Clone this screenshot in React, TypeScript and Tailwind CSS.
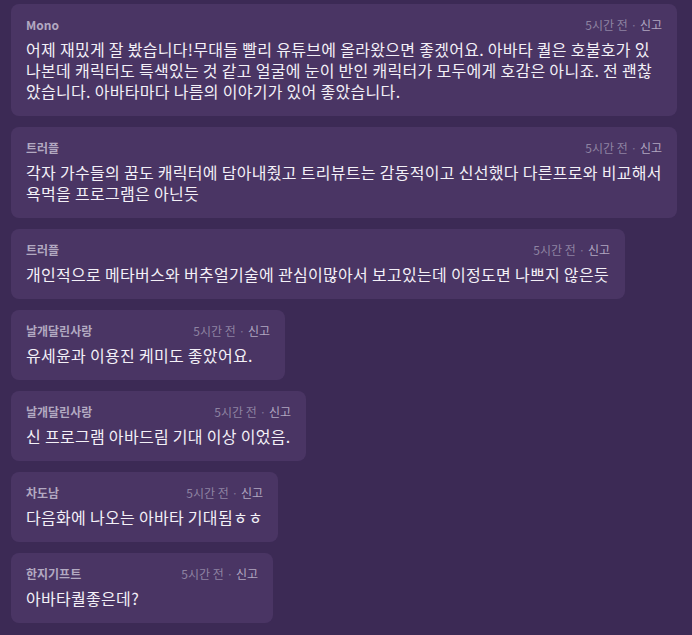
import React from 'react';

type Comment = {
  name: string;
  text: string;
  width: string;
};

const comments: Comment[] = [
  {
    name: 'Mono',
    text: '어제 재밌게 잘 봤습니다!무대들 빨리 유튜브에 올라왔으면 좋겠어요. 아바타 퀄은 호불호가 있나본데 캐릭터도 특색있는 것 같고 얼굴에 눈이 반인 캐릭터가 모두에게 호감은 아니죠. 전 괜찮았습니다. 아바타마다 나름의 이야기가 있어 좋았습니다.',
    width: 'w-[666px]',
  },
  {
    name: '트러플',
    text: '각자 가수들의 꿈도 캐릭터에 담아내줬고 트리뷰트는 감동적이고 신선했다 다른프로와 비교해서 욕먹을 프로그램은 아닌듯',
    width: 'w-[666px]',
  },
  {
    name: '트러플',
    text: '개인적으로 메타버스와 버추얼기술에 관심이많아서 보고있는데 이정도면 나쁘지 않은듯',
    width: 'w-[614px]',
  },
  {
    name: '날개달린사랑',
    text: '유세윤과 이용진 케미도 좋았어요.',
    width: 'w-[274px]',
  },
  {
    name: '날개달린사랑',
    text: '신 프로그램 아바드림 기대 이상 이었음.',
    width: 'w-[295px]',
  },
  {
    name: '차도남',
    text: '다음화에 나오는 아바타 기대됨ㅎㅎ',
    width: 'w-[267px]',
  },
  {
    name: '한지기프트',
    text: '아바타퀄좋은데?',
    width: 'w-[262px]',
  },
];

const CommentCard: React.FC<{ comment: Comment }> = ({ comment }) => {
  return (
    <div className={`${comment.width} rounded-lg bg-[#4a3564] pl-[15px] pr-[15px] pt-[14px] pb-[14px]`}>
      {/* 작성자 + 시간 */}
      <div className="flex items-center justify-between h-[14px] text-[12px] leading-[14px]">
        <span className="font-bold text-[#b2a9c1]">{comment.name}</span>
        <span className="text-[#8e83a2]">
          5시간 전 <span className="text-[#7d7192]">·</span>{' '}
          <span className="text-[#b0a6c0]">신고</span>
        </span>
      </div>
      {/* 본문 */}
      <p className="mt-[7px] text-[16px] leading-[21px] tracking-[0.3px] text-[#f3f0f7] break-all">
        {comment.text}
      </p>
    </div>
  );
};

const App: React.FC = () => {
  return (
    <div
      className="min-h-screen bg-[#3c2a55] pl-[11px] pt-[4px] pb-[10px]"
      style={{ fontFamily: '"Noto Sans CJK KR", "Noto Sans", sans-serif' }}
    >
      <div className="flex flex-col gap-[11px]">
        {comments.map((c, i) => (
          <CommentCard key={i} comment={c} />
        ))}
      </div>
    </div>
  );
};

export default App;
